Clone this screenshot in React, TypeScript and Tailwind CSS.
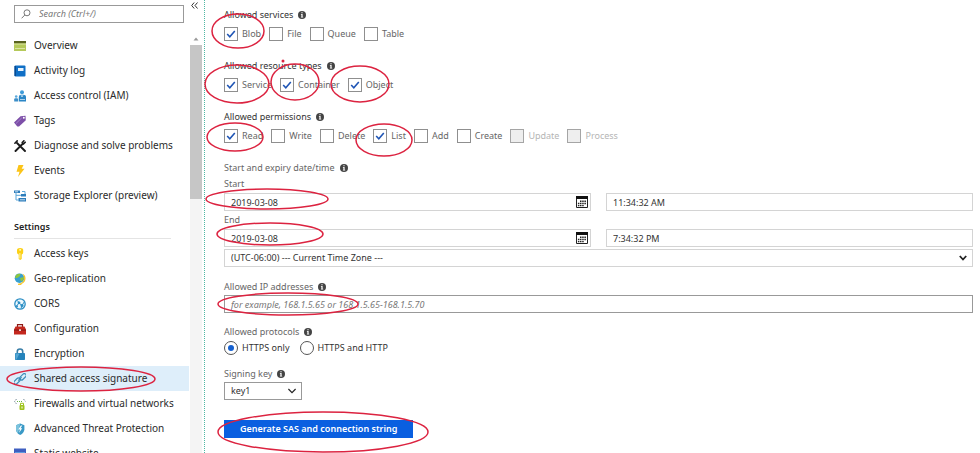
import type { ReactNode } from "react";

type NavItem = { label: string; icon: ReactNode; active?: boolean };

const generalItems: NavItem[] = [
  {
    label: "Overview",
    icon: (
      <>
        <path fill="#b5c95a" d="M0 1h12v10H0z" />
        <path fill="#59631f" d="M0 1h12v2.5H0z" />
        <path fill="#dce6a4" d="M0 3.5h12v1H0zM1 8h10v1H1z" />
      </>
    ),
  },
  {
    label: "Activity log",
    icon: (
      <>
        <rect x="0.5" y="0.5" width="11" height="11" rx="1" fill="#0f6fc6" />
        <path fill="#0a4a8f" d="M.5 1H2v10H.5z" />
        <path fill="#e8f3fc" d="M4 3h5.5v3H4z" />
      </>
    ),
  },
  {
    label: "Access control (IAM)",
    icon: (
      <>
        <circle cx="8" cy="2.2" r="2" fill="#3f9bd8" />
        <path fill="#2b86c6" d="M4.8 11.5V7q0-2.3 2.2-2.3h2.2Q12 4.7 12 7v4.5z" />
        <circle cx="2.2" cy="6.5" r="1.3" fill="#5aa9dc" />
        <path fill="#3d8fc9" d="M.2 11.500v-2q0-1.300 1.200-1.300h1.500q1.200 0 1.200 1.300v2z" />
        <path stroke="#e6f3fb" strokeWidth=".7" d="m7 5 1 2 1-2M6 9.500h5" fill="none" />
      </>
    ),
  },
  {
    label: "Tags",
    icon: (
      <>
        <path fill="#7d4fa8" d="M0 7.500 6.500 1.200 11.500.8 11.800 5.200 5 11.500 3.300 11.600z" />
        <circle cx="9.800" cy="2.700" r="1" fill="#fff" />
        <path stroke="#a583c9" d="M2 8.500 7.800 2.800" />
      </>
    ),
  },
  {
    label: "Diagnose and solve problems",
    icon: (
      <g fill="none" stroke="#1b1b1b" strokeLinecap="round">
        <path strokeWidth="1.900" d="M1.500 11 9 3.500M3 3l8 8" />
        <path strokeWidth="1.600" d="M.9 3.200 3.200.9M8.200 2.500 9.900.8M9.500 3.900l1.700-1.700" />
      </g>
    ),
  },
  {
    label: "Events",
    icon: <path fill="#fbc419" d="M4.500 0h5L7.700 3.700h2.800L4 12l1.500-5.200H2.500z" />,
  },
  {
    label: "Storage Explorer (preview)",
    icon: (
      <>
        <path fill="#2d7dbb" d="M0 .5h6v2.500H0zM7 4h5v2.500H7zM4.500 8H12v3.500H4.500z" />
        <path fill="none" stroke="#5aa5d8" d="M2 3v7h3M2 5.300h5M8 1.500h3V4" />
        <path stroke="#e8f4fc" strokeWidth=".8" d="M1 1.800h3M6 9.800h5" />
      </>
    ),
  },
];

const settingsItems: NavItem[] = [
  {
    label: "Access keys",
    icon: (
      <>
        <path fill="#fcd116" d="M3 2q0-2 3.200-2Q9.200 0 9.200 2v2.500q0 1.500-1.500 2V11L6.200 12 4.700 11V6.500Q3 6 3 4.500z" />
        <path stroke="#fff3b0" d="M5.900 5v5.500" />
        <circle cx="6.100" cy="1.900" r=".8" fill="#fff" />
      </>
    ),
  },
  {
    label: "Geo-replication",
    icon: (
      <>
        <circle cx="5.500" cy="5.200" r="4.800" fill="#38a0d0" />
        <path fill="#8cc63f" d="M2 2q3-2 4.500-1L5.500 3.500 3 5 1 5zM6 5l4-1q0 3-3 4.500z" />
        <path fill="#f7c52b" d="M8.500.8Q11.500 2 11.500 5.500T7.500 11l-.2 1H4v-1.300Q9.500 10 10 6 10 3 8.500.8z" />
      </>
    ),
  },
  {
    label: "CORS",
    icon: (
      <>
        <circle cx="6" cy="6" r="5.200" fill="#eef8fd" stroke="#2b8ec4" strokeWidth="1.300" />
        <path fill="none" stroke="#2b8ec4" d="m2.500 8 2.500-3 3 2.500 2.500-4M5 5 3.500 2.500M8 7.500 7 10.500" />
        <circle cx="5" cy="4.800" r="1.400" fill="#2b8ec4" />
        <circle cx="8" cy="7.500" r="1.500" fill="#2b8ec4" />
        <circle cx="3" cy="8.200" r="1" fill="#2b8ec4" />
      </>
    ),
  },
  {
    label: "Configuration",
    icon: (
      <>
        <path fill="none" stroke="#8d1b16" strokeWidth="1.200" d="M3.500 4V1.700h5V4" />
        <path fill="#c4281e" d="M1.500 3.500h9l1.500 3v5H0v-5z" />
        <path fill="#8d1b16" d="M0 6.500h12v1.200H0z" />
        <path fill="#f0d5d2" d="M5 6.300h2v1.700H5z" />
      </>
    ),
  },
  {
    label: "Encryption",
    icon: (
      <>
        <path fill="none" stroke="#3a7fa8" strokeWidth="1.600" d="M3.300 6V3.500q0-2.500 2.700-2.500t2.700 2.500V6" />
        <rect x="1" y="5" width="10" height="7" rx=".8" fill="#2583bb" />
        <path fill="#56a7d4" d="M1.500 5.500h4l-3 6h-1z" />
      </>
    ),
  },
  {
    label: "Shared access signature",
    active: true,
    icon: (
      <g fill="none" stroke="#3d8eb9" strokeWidth="1.200">
        <rect x="-.8" y="6.300" width="7.500" height="3.600" rx="1.800" transform="rotate(-45 3 8.100)" />
        <rect x="5.200" y="2" width="7.500" height="3.600" rx="1.800" transform="rotate(-45 9 3.800)" />
        <path d="m4.200 7.600 3.400-3.400" />
      </g>
    ),
  },
  {
    label: "Firewalls and virtual networks",
    icon: (
      <>
        <path fill="none" stroke="#788b98" strokeDasharray="1.500 .8" d="M2.500 1 .6 3.500 2.500 6M9.500 1l1.900 2.500" />
        <path stroke="#67b346" strokeDasharray="1 1" d="M3 3.500h6" />
        <rect x="5.500" y="7" width="5" height="5" rx="1" fill="#9fc31c" />
        <path fill="none" stroke="#9fc31c" d="M6.500 7V5.300h3V7" />
        <path stroke="#fff" d="M8 8.500v2" />
      </>
    ),
  },
  {
    label: "Advanced Threat Protection",
    icon: (
      <>
        <path fill="#3999c6" d="M2 2.200 6.200.5l4.200 1.700v4Q10.200 10 6.200 12 2 10 2 6.200z" />
        <path fill="#7cc3dd" d="M6.200.5 2 2.200v4Q2.200 9 4 10.500z" />
        <path fill="#fff" d="m6.800 2.500-2.500 4h1.700L5 10l3.200-4.700H6.500l1.800-2.800z" />
      </>
    ),
  },
  {
    label: "Static website",
    icon: (
      <>
        <path fill="#3f5fc0" d="M0 .5h12v11H0z" />
        <path fill="#5f9be0" d="M1 4h10v6.500H1z" />
      </>
    ),
  },
];

type Option = { label: string; checked?: boolean; disabled?: boolean };

const services: Option[] = [
  { label: "Blob", checked: true },
  { label: "File" },
  { label: "Queue" },
  { label: "Table" },
];

const resourceTypes: Option[] = [
  { label: "Service", checked: true },
  { label: "Container", checked: true },
  { label: "Object", checked: true },
];

const permissions: Option[] = [
  { label: "Read", checked: true },
  { label: "Write" },
  { label: "Delete" },
  { label: "List", checked: true },
  { label: "Add" },
  { label: "Create" },
  { label: "Update", disabled: true },
  { label: "Process", disabled: true },
];

// cx, cy, rx, ry
const marks = [
  [81, 379, 74, 12],
  [238, 31, 26, 17],
  [237, 84, 32, 19],
  [295, 82, 24, 18],
  [360, 84, 29, 18],
  [235, 137, 28, 14],
  [384, 140, 28, 16],
  [267, 199, 61, 10],
  [270, 234, 53, 11],
  [288, 304, 70, 11],
  [323, 432, 105, 20],
];

const NavList = ({ items }: { items: NavItem[] }) => (
  <ul>
    {items.map((item) => (
      <li key={item.label}>
        <a
          href="#"
          className={`flex h-[25px] items-center gap-2 pl-[14px] text-[10px] whitespace-nowrap text-[#2b2b2b] ${
            item.active ? "bg-[#deeefa]" : ""
          }`}
        >
          <svg viewBox="0 0 12 12" className="size-3 shrink-0">
            {item.icon}
          </svg>
          {item.label}
        </a>
      </li>
    ))}
  </ul>
);

const InfoIcon = () => (
  <svg viewBox="0 0 8 8" className="size-2 shrink-0">
    <circle cx="4" cy="4" r="4" fill="#444" />
    <path fill="#fff" d="M3.400 1.200h1.200v1.100H3.400zM2.900 3.100h1.700v2.700h.6v.7H2.900v-.7h.5v-2h-.5z" />
  </svg>
);

const FieldLabel = ({ children, htmlFor, dark }: { children: ReactNode; htmlFor?: string; dark?: boolean }) => {
  const className = `flex h-4 items-center gap-[5px] ${dark ? "text-[#333]" : "text-[#666]"}`;
  if (htmlFor) {
    return (
      <label htmlFor={htmlFor} className={className}>
        {children}
        <InfoIcon />
      </label>
    );
  }
  return (
    <legend className={className}>
      {children}
      <InfoIcon />
    </legend>
  );
};

const CheckGroup = ({ title, options }: { title: string; options: Option[] }) => (
  <fieldset className="mb-4">
    <FieldLabel dark>{title}</FieldLabel>
    <div className="mt-[3px] flex h-4 items-center gap-2">
      {options.map((o) => (
        <label
          key={o.label}
          className={`flex items-center gap-1 ${o.disabled ? "text-[#b5b5b5]" : "text-[#666]"}`}
        >
          <span className="grid">
            <input
              type="checkbox"
              defaultChecked={o.checked}
              disabled={o.disabled}
              className="peer col-start-1 row-start-1 size-[14px] appearance-none border border-[#8f8f8f] bg-white disabled:border-[#a5a5a5] disabled:bg-[#eee]"
            />
            <svg
              viewBox="0 0 14 14"
              className="pointer-events-none invisible col-start-1 row-start-1 size-[14px] peer-checked:visible"
            >
              <path fill="none" stroke="#1f55b5" strokeWidth="1.600" d="m3.200 7 2.600 2.700 5-5.700" />
            </svg>
          </span>
          {o.label}
        </label>
      ))}
    </div>
  </fieldset>
);

const CalendarIcon = () => (
  <svg viewBox="0 0 12 12" className="size-3">
    <path fill="#fff" stroke="#222" d="M.5.500h11v11H.5z" />
    <path fill="#111" d="M0 0h12v3H0z" />
    <path
      fill="#222"
      d="M4 4.500h1.500V6H4zM6.200 4.500h1.500V6H6.200zM8.400 4.500h1.500V6H8.400zM1.900 6.700h1.500v1.500H1.900zM4 6.700h1.500v1.500H4zM6.200 6.700h1.500v1.500H6.200zM8.400 6.700h1.500v1.500H8.400zM1.900 8.900h1.500v1.300H1.900zM4 8.900h1.500v1.300H4zM6.200 8.900h1.500v1.300H6.200z"
    />
  </svg>
);

const DateRow = ({ label, date, time }: { label: string; date: string; time: string }) => (
  <div>
    <label htmlFor={label} className="flex h-4 items-center text-[#666]">
      {label}
    </label>
    <div className="mt-px mb-px grid grid-cols-2 gap-[15px]">
      <div className="flex h-[18px] items-center border border-[#d4d4d4] pr-[2px]">
        <input id={label} type="text" defaultValue={date} className="h-4 min-w-0 flex-1 px-1.5 outline-none" />
        <button type="button" aria-label={`Pick ${label} date`}>
          <CalendarIcon />
        </button>
      </div>
      <input
        type="text"
        aria-label={`${label} time`}
        defaultValue={time}
        className="h-[18px] min-w-0 border border-[#d4d4d4] px-1.5 outline-none"
      />
    </div>
  </div>
);

const Sidebar = () => (
  <aside className="flex w-[205px] shrink-0 border-r border-dotted border-[#4fb8a3]">
    <nav className="min-w-0 flex-1">
      <div className="mt-[5px] mb-[10px] ml-[14px] flex h-[18px] w-[170px] items-center gap-2 border border-[#999] px-1.5">
        <svg viewBox="0 0 10 10" className="size-[10px] shrink-0" fill="none" stroke="#777">
          <circle cx="6" cy="3.800" r="3" />
          <path d="M3.800 6 .6 9.300" />
        </svg>
        <input
          type="text"
          aria-label="Search"
          placeholder="Search (Ctrl+/)"
          className="w-full min-w-0 text-[9px] italic outline-none placeholder:text-[#777]"
        />
      </div>
      <NavList items={generalItems} />
      <h2 className="mt-[10px] ml-[14px] h-5 text-[9px] leading-[18px] font-semibold text-[#222]">Settings</h2>
      <hr className="mr-[18px] mb-[2px] ml-[14px] border-[#e4e4e4]" />
      <NavList items={settingsItems} />
    </nav>
    <div className="flex w-[15px] flex-col">
      <button type="button" aria-label="Collapse menu" className="flex h-[34px] pt-[2px] pl-[2px]">
        <svg viewBox="0 0 7 7" className="size-[7px]" fill="none" stroke="#333">
          <path d="M3.200.5.700 3.500l2.500 3M6.500.5 4 3.500l2.500 3" />
        </svg>
      </button>
      <div className="ml-px flex w-3 flex-1 flex-col items-center bg-[#f4f4f4]">
        <svg viewBox="0 0 12 11" className="h-[11px] w-3 shrink-0">
          <path fill="#fff" d="M0 0h12v11H0z" />
          <path fill="#999" d="m3.500 6.500 2.500-3 2.500 3z" />
        </svg>
        <div className="h-[154px] w-3 bg-[#c6c6c6]" />
      </div>
    </div>
  </aside>
);

const App = () => (
  <div className="relative flex h-screen overflow-hidden bg-white font-['Noto_Sans','Open_Sans',sans-serif] text-[9px] text-[#333]">
    <Sidebar />
    <main className="min-w-0 flex-1 pt-[7px] pr-[7px] pl-[19px]">
      <form>
        <CheckGroup title="Allowed services" options={services} />
        <CheckGroup title="Allowed resource types" options={resourceTypes} />
        <CheckGroup title="Allowed permissions" options={permissions} />

        <fieldset>
          <FieldLabel>Start and expiry date/time</FieldLabel>
          <DateRow label="Start" date="2019-03-08" time="11:34:32 AM" />
          <DateRow label="End" date="2019-03-08" time="7:34:32 PM" />
          <div className="mt-[2px] grid items-center">
            <select
              aria-label="Time zone"
              className="col-start-1 row-start-1 h-[18px] appearance-none border border-[#d4d4d4] px-1.5 outline-none"
            >
              <option>(UTC-06:00) --- Current Time Zone ---</option>
            </select>
            <svg
              viewBox="0 0 8 6"
              className="pointer-events-none col-start-1 row-start-1 mr-[6px] h-[6px] w-2 justify-self-end"
            >
              <path fill="none" stroke="#222" strokeWidth="1.800" d="m.8 1 3.200 3.500L7.200 1" />
            </svg>
          </div>
        </fieldset>

        <div className="mt-3">
          <FieldLabel htmlFor="ip">Allowed IP addresses</FieldLabel>
          <input
            id="ip"
            type="text"
            placeholder="for example, 168.1.5.65 or 168.1.5.65-168.1.5.70"
            className="block h-[18px] w-full border border-[#999] px-1.5 italic outline-none placeholder:text-[#777]"
          />
        </div>

        <fieldset className="mt-[11px]">
          <FieldLabel>Allowed protocols</FieldLabel>
          <div className="flex h-4 items-center gap-[10px]">
            {["HTTPS only", "HTTPS and HTTP"].map((p, i) => (
              <label key={p} className="flex items-center gap-1">
                <span className="grid place-items-center">
                  <input
                    type="radio"
                    name="protocol"
                    defaultChecked={i === 0}
                    className="peer col-start-1 row-start-1 size-[14px] appearance-none rounded-full border border-[#555] bg-white"
                  />
                  <span className="pointer-events-none invisible col-start-1 row-start-1 size-[6px] rounded-full bg-[#1460d0] peer-checked:visible" />
                </span>
                {p}
              </label>
            ))}
          </div>
        </fieldset>

        <div className="mt-[10px]">
          <FieldLabel htmlFor="key">Signing key</FieldLabel>
          <div className="grid w-[78px] items-center">
            <select
              id="key"
              className="col-start-1 row-start-1 h-[18px] appearance-none border border-[#999] px-1.5 outline-none"
            >
              <option>key1</option>
              <option>key2</option>
            </select>
            <svg
              viewBox="0 0 8 6"
              className="pointer-events-none col-start-1 row-start-1 mr-[6px] h-[6px] w-2 justify-self-end"
            >
              <path fill="none" stroke="#222" strokeWidth="1.200" d="m.4 1 3.600 3.600L7.600 1" />
            </svg>
          </div>
        </div>

        <button
          type="button"
          className="mt-5 h-[18px] bg-[#0a5fe0] px-4 font-semibold whitespace-nowrap text-white"
        >
          Generate SAS and connection string
        </button>
      </form>
    </main>

    <svg className="pointer-events-none absolute inset-0 size-full" fill="none" stroke="#dc2340" strokeWidth="1.500">
      {marks.map(([cx, cy, rx, ry]) => (
        <ellipse key={`${cx}-${cy}`} cx={cx} cy={cy} rx={rx} ry={ry} />
      ))}
      <circle cx="283" cy="61" r="1.500" fill="#dc2340" stroke="none" />
    </svg>
  </div>
);

export default App;
